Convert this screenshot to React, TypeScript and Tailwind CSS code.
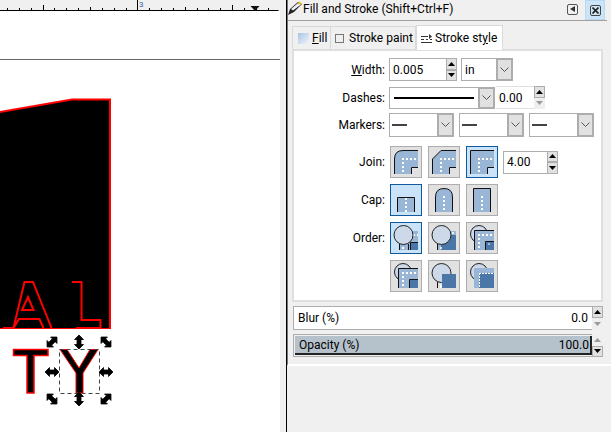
import React from "react";

const F = "#9ab6d6", D = "#4a76a8", C = "#cdd9e8";

function Dots() {
  return (
    <g stroke="#fff" strokeWidth="2" strokeDasharray="2 2" fill="none">
      <path d="M12 13H28" />
      <path d="M13 12V28" />
    </g>
  );
}

function Join({ kind }: { kind: 0 | 1 | 2 }) {
  const corner =
    kind === 0 ? "M4.5 28V13Q4.5 4.5 13 4.5H28" : kind === 1 ? "M4.5 28V13L13 4.5H28" : "M4.5 28V4.5H28";
  return (
    <>
      <path d={`${corner}V21H21V28Z`} fill={F} stroke="none" />
      <path d={`${corner}M28 21.5H21.5V28`} fill="none" stroke="#111" strokeWidth="1" />
      <Dots />
    </>
  );
}

function Cap({ kind }: { kind: 0 | 1 | 2 }) {
  const d =
    kind === 0 ? "M7.5 28V13.5H24.5V28" : kind === 1 ? "M7.5 28V13Q7.5 4.5 16 4.5Q24.5 4.5 24.5 13V28" : "M7.5 28V4.5H24.5V28";
  return (
    <>
      <path d={`${d}Z`} fill={F} />
      <path d={d} fill="none" stroke="#111" strokeWidth="1" />
      <path d={`M16 ${kind === 0 ? 14 : 12}V28`} stroke="#fff" strokeWidth="2" strokeDasharray="2 2" />
    </>
  );
}

function Circle() {
  return <circle cx="13.5" cy="13" r="9.5" fill={C} stroke="#222" strokeWidth="1" />;
}

function Order({ kind }: { kind: number }) {
  if (kind === 0)
    return (
      <>
        <path d="M9 28V9H28V28Z" fill={F} />
        <path d="M20.5 28V20.5H28V28Z" fill={D} />
        <path d="M28 20.5H20.5V28" fill="none" stroke="#111" />
        <path d="M9.5 28V22M18.5 28V22" stroke="#111" />
        <path d="M23 13H28M13 25V28" stroke="#fff" strokeWidth="2" strokeDasharray="2 2" />
        <Circle />
      </>
    );
  if (kind === 1)
    return (
      <>
        <path d="M9 28V9H28V28Z" fill={F} />
        <path d="M13 28V13H28V28Z" fill={D} />
        <path d="M9.5 28V22" stroke="#111" />
        <path d="M24 11H28M13 25V28" stroke="#fff" strokeWidth="1.5" strokeDasharray="2 2" />
        <Circle />
      </>
    );
  if (kind === 2 || kind === 3)
    return (
      <>
        <circle cx="13" cy="12" r="8.5" fill={C} stroke="#222" />
        <path d="M8 28V8H28V28Z" fill={F} />
        <path d="M20 28V20H28V28Z" fill={D} />
        <path d="M8.5 28V8.5H28M28 19.5H19.5V28" fill="none" stroke="#111" />
        <path d="M12 13H28M13 12V28" stroke="#fff" strokeWidth="2" strokeDasharray="2 2" />
        {kind === 2 && <path d="M22 22H24" stroke="#fff" strokeWidth="1" />}
      </>
    );
  if (kind === 4)
    return (
      <>
        <Circle />
        <path d="M9.5 28V22" stroke="#111" />
        <path d="M14 28V14H28V28Z" fill={D} />
        <path d="M13 25V28" stroke="#fff" strokeWidth="1.5" />
      </>
    );
  return (
    <>
      <circle cx="13" cy="12" r="8.5" fill={C} stroke="#222" />
      <path d="M8 28V8H28V28Z" fill={F} />
      <path d="M13 28V13H28V28Z" fill={D} />
      <path d="M13 13.5H28M13.5 13V28" stroke="#fff" strokeWidth="1" strokeDasharray="2 1" />
    </>
  );
}

function IconBtn({ on, children }: { on?: boolean; children: React.ReactNode }) {
  return (
    <div className={`w-8 h-8 border ${on ? "border-[#0f5a9c] bg-[#cbe3f8]" : "border-[#adadad] bg-[#e1e1e1]"}`}>
      <svg width="30" height="30" viewBox="1 1 30 30" className="block">
        {children}
      </svg>
    </div>
  );
}

function Spin({ topOff, botOff, h = "h-[23px]" }: { topOff?: boolean; botOff?: boolean; h?: string }) {
  const one = (up: boolean, off?: boolean) => (
    <div className={`flex-1 flex items-center justify-center border ${off ? "border-[#efefef] bg-[#efefef]" : "border-[#adadad] bg-[#e1e1e1]"}`}>
      <svg width="7" height="4" viewBox="0 0 7 4" className="block">
        <path d={up ? "M0 4L3.5 0L7 4Z" : "M0 0L3.5 4L7 0Z"} fill={off ? "#9a9a9a" : "#000"} />
      </svg>
    </div>
  );
  return (
    <div className={`w-[11px] ${h} flex flex-col shrink-0`}>
      {one(true, topOff)}
      {one(false, botOff)}
    </div>
  );
}

function Chevron() {
  return (
    <div className="w-[17px] self-stretch bg-[#e1e1e1] border-2 border-[#adadad] flex items-center justify-center shrink-0 -my-px -mr-px">
      <svg width="9" height="6" viewBox="0 0 9 6" className="block">
        <path d="M0.5 0.5L4.5 4.5L8.5 0.5" fill="none" stroke="#555" strokeWidth="1" />
      </svg>
    </div>
  );
}

function Marker() {
  return (
    <div className="w-[65px] h-[24px] border border-[#adadad] bg-white flex items-center pl-0.5">
      <div className="flex-1">
        <div className="w-[15px] h-0.5 bg-[#444]" />
      </div>
      <Chevron />
    </div>
  );
}

function Row({ label, children, cls = "" }: { label: React.ReactNode; children: React.ReactNode; cls?: string }) {
  return (
    <div className={`flex items-center ${cls}`}>
      <div className="w-[95px] text-right pr-[4px] text-[12px] leading-4 shrink-0">{label}</div>
      {children}
    </div>
  );
}

function Canvas() {
  const arrows: [number, number, number][] = [
    [52, 342, 135],
    [79, 342, 90],
    [106, 342, 45],
    [52, 372, 0],
    [106, 372, 0],
    [52, 399, 45],
    [79, 399, 90],
    [106, 399, 135],
  ];
  return (
    <svg width="280" height="421" viewBox="0 11 280 421" className="block bg-white">
      <path d="M0 59.5H280" stroke="#666" strokeWidth="1" />
      <path d="M-3 112.5L72 99.5H110V329H-3Z" fill="#000" stroke="#f00" strokeWidth="2" />
      <path
        d="M3 328H13.5L24.5 282H33L51.5 328M13.5 328L19 319H39.5L43.5 328M22 310L28 297L33.5 310ZM72 282H81.5V320H100.5V328H76"
        fill="none"
        stroke="#f00"
        strokeWidth="2"
      />
      <rect x="0" y="329" width="112" height="103" fill="#fff" />
      <path d="M13.5 349.5H48V355.5H34V393H27V355.5H13.5Z" fill="#000" stroke="#f00" strokeWidth="1.5" />
      <path d="M60 349.5H67L79 368L90 349.5H98L83 373V393H76V373Z" fill="#000" stroke="#f00" strokeWidth="1" />
      <rect x="59.5" y="349.5" width="40" height="44" fill="none" stroke="#444" strokeWidth="1" strokeDasharray="4 3" />
      {arrows.map(([x, y, r], i) => (
        <path
          key={i}
          transform={`translate(${x} ${y}) rotate(${r})`}
          d="M-7 0L-2.5 -4.5V-2H2.5V-4.5L7 0L2.5 4.5V2H-2.5V4.5Z"
          fill="#000"
          stroke="#000"
          strokeWidth="0.8"
        />
      ))}
    </svg>
  );
}

function Ruler() {
  const ticks = Array.from({ length: 24 }, (_, i) => 7 + i * 11.85);
  return (
    <div className="relative h-[11px] bg-[#f0f0f0]">
      <svg width="280" height="11" className="block">
        {ticks.map((x, i) => {
          const rx = Math.round(x) + 0.5;
          const top = i === 11 ? 0 : i === 3 || i === 19 ? 5 : i === 7 || i === 15 ? 7 : 8;
          return <path key={i} d={`M${rx} ${top}V10`} stroke="#000" strokeWidth="1" />;
        })}
        <path d="M0 10.5H278.5" stroke="#000" strokeWidth="1" />
        <path d="M250.5 6H259.5L255 11Z" fill="#111" />
      </svg>
      <span className="absolute left-[139px] top-0 text-[8px] leading-[10px] text-[#35609a]">3</span>
    </div>
  );
}

export default function App() {
  return (
    <div
      className="w-[611px] h-[432px] overflow-hidden flex bg-[#f0f0f0] text-[#000]"
      style={{ fontFamily: 'Roboto, "Noto Sans", sans-serif' }}
    >
      <div className="w-[280px] shrink-0 flex flex-col">
        <Ruler />
        <Canvas />
      </div>
      <div className="w-[6px] shrink-0" />
      <div className="w-px bg-black shrink-0" />
      <div className="flex-1 flex flex-col bg-[#f0f0f0]">
        <div className="h-[366px] border-l border-[#777] border-b-2 border-b-white flex flex-col">
          {/* title */}
          <div className="h-[21px] flex items-start border-b border-[#a0a0a0] mr-1 shrink-0">
            <svg width="15" height="15" viewBox="0 0 15 15" className="block shrink-0 mt-px">
              <path d="M0 14L2 8L10 1L14 3L6 11Z" fill="#222" />
              <path d="M3 8L10 2L13 3.5L5 9.5Z" fill="#eee" />
              <path d="M11 0.5L14 2.5L12.5 4L10 2Z" fill="#e8b820" />
            </svg>
            <div className="text-[12px] leading-[18px] flex-1 whitespace-nowrap">Fill and Stroke (Shift+Ctrl+F)</div>
            <div className="flex items-center h-5 mr-[2px]">
              <div className="w-[11px] h-[11px] border border-[#555] rounded-[2px] flex items-center justify-center mr-[7px] mt-[-2px]">
                <svg width="5" height="6" viewBox="0 0 5 6" className="block">
                  <path d="M5 0V6L0 3Z" fill="#333" />
                </svg>
              </div>
              <div className="w-5 h-5 bg-[#cce4f7] border border-[#b8d9f2] flex items-center justify-center">
                <div className="w-[11px] h-[11px] border border-[#444] rounded-[2px] flex items-center justify-center">
                  <svg width="7" height="7" viewBox="0 0 7 7" className="block">
                    <path d="M0.5 0.5L6.5 6.5M6.5 0.5L0.5 6.5" stroke="#222" strokeWidth="1.6" />
                  </svg>
                </div>
              </div>
            </div>
          </div>
          {/* tabs */}
          <div className="flex items-end h-[28px] ml-[4px] shrink-0">
            <div className="w-[39px] h-[23px] border border-b-0 border-[#d9d9d9] flex items-center pl-[5px] gap-[3px] text-[12px]">
              <div className="w-[11px] h-[11px] bg-gradient-to-br from-[#a8c4e4] to-[#f2f6fb]" />
              <span>
                <span className="underline">F</span>ill
              </span>
            </div>
            <div className="w-[85px] h-[23px] border-t border-r border-[#d9d9d9] flex items-center pl-[4px] gap-[5px] text-[12px] whitespace-nowrap">
              <div className="w-[9px] h-[9px] border border-[#777] shrink-0" />
              <span>Stroke paint</span>
            </div>
            <div className="w-[87px] h-[25px] bg-white border border-b-0 border-[#d9d9d9] flex items-center pl-1 gap-[3px] text-[12px] whitespace-nowrap relative top-px z-10">
              <svg width="11" height="9" viewBox="0 0 11 9" className="block">
                <path d="M0 2.5H7M0 5.5H3M5 5.5H7M9 5.5H11M0 8.5H11" stroke="#333" />
                <path d="M8 0L11 2.5L8 5Z" fill="#333" />
              </svg>
              <span>
                Stroke st<span className="underline">y</span>le
              </span>
            </div>
          </div>
          {/* content */}
          <div className="ml-[4px] w-[311px] h-[253px] shrink-0 bg-white border-2 border-[#dfdfdf] pt-[7px] flex flex-col">
            <Row label={<><span className="underline">W</span>idth:</>} cls="h-[23px]">
              <div className="w-[57px] h-[23px] border border-r-0 border-[#adadad] flex items-center pl-[3px] text-[12px]">0.005</div>
              <Spin />
              <div className="w-[52px] h-[23px] ml-[4px] border border-[#adadad] flex items-center pl-[3px] text-[12px]">
                <span className="flex-1">in</span>
                <Chevron />
              </div>
            </Row>
            <Row label="Dashes:" cls="h-[23px] mt-[5px]">
              <div className="w-[105px] h-[22px] border border-[#adadad] flex items-center pl-1">
                <div className="flex-1 pr-1">
                  <div className="h-0.5 bg-black w-[80px]" />
                </div>
                <Chevron />
              </div>
              <div className="w-[38px] h-[23px] ml-[2px] flex items-center pl-[3px] border-y border-[#dfdfdf] text-[12px]">0.00</div>
              <Spin botOff />
            </Row>
            <Row label="Markers:" cls="h-[24px] mt-[4px]">
              <div className="flex gap-[5px]">
                <Marker />
                <Marker />
                <Marker />
              </div>
            </Row>
            <Row label="Join:" cls="h-8 mt-[9px]">
              <div className="flex gap-1.5 pl-px">
                <IconBtn><Join kind={0} /></IconBtn>
                <IconBtn><Join kind={1} /></IconBtn>
                <IconBtn on><Join kind={2} /></IconBtn>
              </div>
              <div className="w-[44px] h-[23px] ml-[5px] border border-r-0 border-[#adadad] flex items-center pl-[3px] text-[12px]">4.00</div>
              <Spin />
            </Row>
            <Row label="Cap:" cls="h-8 mt-[6px]">
              <div className="flex gap-1.5 pl-px">
                <IconBtn on><Cap kind={0} /></IconBtn>
                <IconBtn><Cap kind={1} /></IconBtn>
                <IconBtn><Cap kind={2} /></IconBtn>
              </div>
            </Row>
            <Row label="Order:" cls="h-8 mt-[6px]">
              <div className="flex gap-1.5 pl-px">
                <IconBtn on><Order kind={0} /></IconBtn>
                <IconBtn><Order kind={1} /></IconBtn>
                <IconBtn><Order kind={2} /></IconBtn>
              </div>
            </Row>
            <Row label="" cls="h-8 mt-[6px]">
              <div className="flex gap-1.5 pl-px">
                <IconBtn><Order kind={3} /></IconBtn>
                <IconBtn><Order kind={4} /></IconBtn>
                <IconBtn><Order kind={5} /></IconBtn>
              </div>
            </Row>
          </div>
          {/* blur */}
          <div className="flex ml-[5px] mt-[4px] h-[24px] shrink-0">
            <div className="w-[299px] border border-r-0 border-[#adadad] bg-white flex items-center justify-between px-1 text-[12px]">
              <span>Blur (%)</span>
              <span>0.0</span>
            </div>
            <Spin botOff h="h-[24px]" />
          </div>
          <div className="flex ml-[5px] mt-[4px] h-[23px] shrink-0">
            <div className="w-[299px] border border-r-0 border-[#adadad] p-px pr-0">
              <div className="h-full bg-[#b5c1cb] border-b-2 border-r-2 border-[#222] flex items-center justify-between pl-1 pr-px text-[12px] leading-none">
                <span>Opacity (%)</span>
                <span>100.0</span>
              </div>
            </div>
            <Spin topOff />
          </div>
        </div>
      </div>
    </div>
  );
}
